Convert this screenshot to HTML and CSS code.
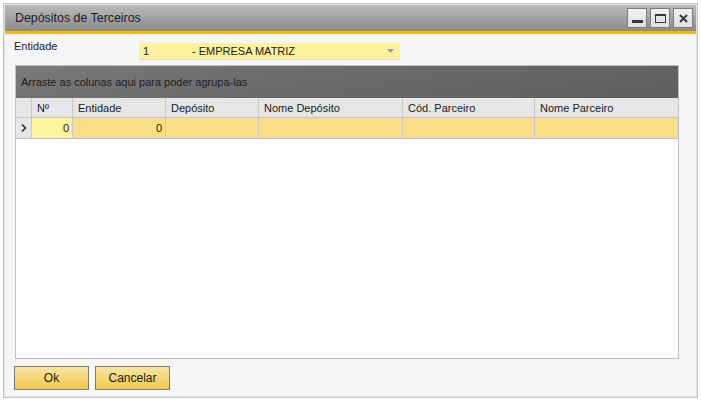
FILE: index.html
```html
<!DOCTYPE html>
<html>
<head>
<meta charset="utf-8">
<link rel="stylesheet" href="styles.css">
</head>
<body>
<div class="window">
  <div class="titlebar">
    <span class="title">Depósitos de Terceiros</span>
    <div class="winbtns">
      <span class="wbtn"><svg width="13" height="13" viewBox="0 0 13 13"><rect x="1" y="8" width="11" height="3" fill="#3a3a3a"/></svg></span>
      <span class="wbtn"><svg width="13" height="13" viewBox="0 0 13 13"><rect x="1.5" y="2.5" width="10" height="8" fill="none" stroke="#3a3a3a"/><rect x="1" y="2" width="11" height="2" fill="#3a3a3a"/></svg></span>
      <span class="wbtn"><svg width="13" height="13" viewBox="0 0 13 13"><path d="M3 3 L10 10 M10 3 L3 10" stroke="#3a3a3a" stroke-width="2"/></svg></span>
    </div>
  </div>
  <div class="body">
    <div class="field">
      <span class="label">Entidade</span>
      <div class="combo">
        <span class="code">1</span>
        <span class="cname">- EMPRESA MATRIZ</span>
        <svg class="arrow" width="7" height="4" viewBox="0 0 7 4"><path d="M0 0 H7 L3.5 4 Z" fill="#9a9a9a"/></svg>
      </div>
    </div>
    <div class="grid">
      <div class="groupbar">Arraste as colunas aqui para poder agrupa-las</div>
      <div class="row head">
        <div class="cell sel"></div>
        <div class="cell c1">Nº</div>
        <div class="cell c2">Entidade</div>
        <div class="cell c3">Depósito</div>
        <div class="cell c4">Nome Depósito</div>
        <div class="cell c5">Cód. Parceiro</div>
        <div class="cell c6">Nome Parceiro</div>
      </div>
      <div class="row data">
        <div class="cell sel"><svg width="6" height="8" viewBox="0 0 6 8"><path d="M1 0.5 L4.5 4 L1 7.5" fill="none" stroke="#333" stroke-width="1.6"/></svg></div>
        <div class="cell c1 num cur">0</div>
        <div class="cell c2 num">0</div>
        <div class="cell c3"></div>
        <div class="cell c4"></div>
        <div class="cell c5"></div>
        <div class="cell c6"></div>
      </div>
    </div>
    <div class="buttons">
      <button class="btn">Ok</button>
      <button class="btn">Cancelar</button>
    </div>
  </div>
</div>
</body>
</html>
```
FILE: styles.css
```css
html, body { margin: 0; padding: 0; background: #ffffff; }
body { padding: 3px 3px 2px 3px; font-family: "Liberation Sans", Arial, sans-serif; font-size: 11px; color: #1a1a1a; }
.window {
  width: 695px; height: 395px; box-sizing: border-box;
  border: 1px solid #c4c4c4; outline: 1px solid #e4e4e4; outline-offset: -2px;
  background: #f6f6f6; display: flex; flex-direction: column;
}
.titlebar {
  height: 26px; margin: 1px 1px 0 1px;
  background: linear-gradient(#b9b9b9, #8c8c8c);
  border-bottom: 3px solid #f5b90e;
  display: flex; align-items: center; justify-content: space-between;
  padding-left: 10px; padding-right: 3px;
}
.title { font-size: 12.4px; color: #1c1a2a; }
.winbtns { display: flex; gap: 3px; }
.wbtn {
  width: 18px; height: 18px; border: 1px solid #7c7c7c; background: linear-gradient(#f0f0f0, #e0e0e0);
  display: flex; align-items: center; justify-content: center;
}
.body { flex: 1; display: flex; flex-direction: column; padding: 6px 18px 0 10px; }
.field { display: flex; align-items: center; height: 18px; }
.label { width: 125px; position: relative; top: -3px; }
.combo {
  width: 261px; height: 17px; box-sizing: border-box; background: #fff29d;
  border-bottom: 1px solid #e2dcb8;
  display: flex; align-items: center; padding-left: 4px; padding-right: 6px; position: relative; top: 2px;
}
.code { width: 49px; }
.cname { flex: 1; }
.grid {
  margin-top: 7px; margin-left: 1px; height: 294px; box-sizing: border-box;
  border: 1px solid #c0c0c0; background: #ffffff;
}
.groupbar {
  height: 32px; box-sizing: border-box; padding: 10px 0 0 5px; color: #1e1e1e;
  background: linear-gradient(170deg, #7a7a7a 0%, #6c6c6c 40%, #5e5e5e 100%);
}
.row { display: flex; }
.head { height: 20px; background: #e6e6e6; }
.data { height: 21px; background: #fbdc88; }
.cell { box-sizing: border-box; border-right: 1px solid #c8c8c8; border-bottom: 1px solid #c4c4c4; padding: 0 5px; display: flex; align-items: center; }
.sel { width: 16px; padding: 0; justify-content: center; background: #e6e6e6; }
.c1 { width: 41px; }
.c2 { width: 93px; }
.c3 { width: 93px; }
.c4 { width: 144px; }
.c5 { width: 132px; }
.c6 { flex: 1; border-right: none; }
.num { justify-content: flex-end; padding-right: 3px; }
.cur { background: #fff39e; }
.buttons { display: flex; gap: 6px; margin-top: 7px; margin-left: 0; }
.btn {
  width: 75px; height: 24px; font: inherit; color: #1a1a1a; font-size: 12px;
  border: 1px solid #7b7b7b; background: linear-gradient(#f8e6a6, #f0c94c); padding: 0;
}
```
